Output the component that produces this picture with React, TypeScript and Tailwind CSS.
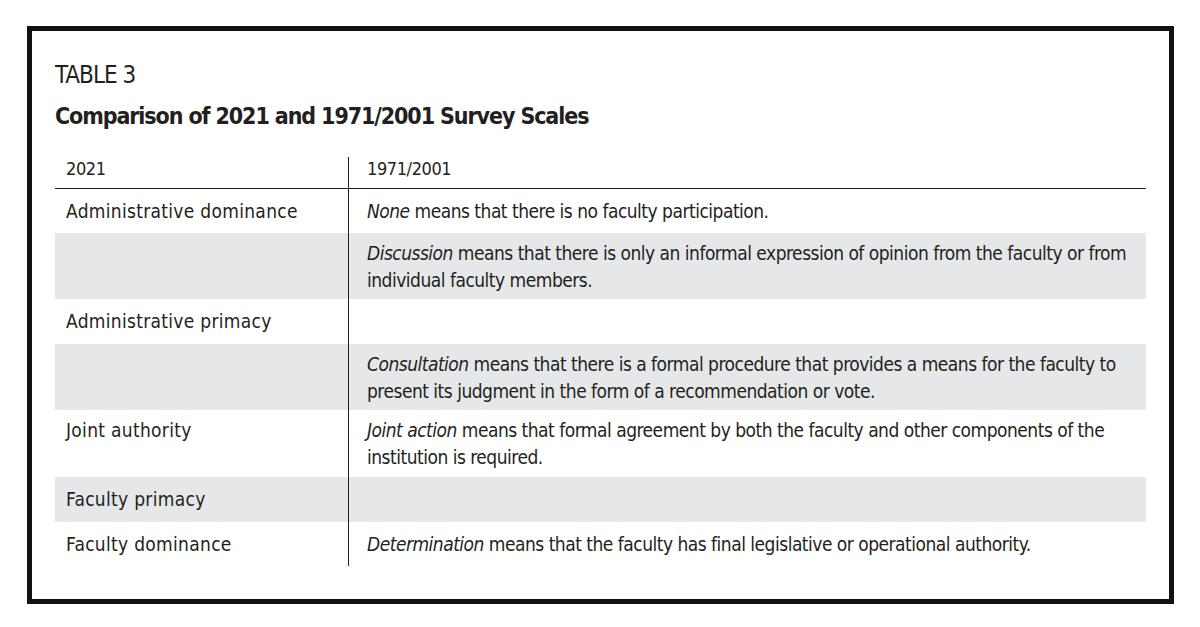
import React from "react";

const font = {
  fontFamily:
    "'Liberation Sans Narrow', 'DejaVu Sans Condensed', 'Roboto Condensed', 'Liberation Sans', sans-serif",
};

type Row = {
  left: string;
  right: React.ReactNode;
  h: string;
  gray: boolean;
  multi: boolean;
};

const rows: Row[] = [
  {
    left: "Administrative dominance",
    right: (
      <>
        <i>None</i> means that there is no faculty participation.
      </>
    ),
    h: "h-[44px]",
    gray: false,
    multi: false,
  },
  {
    left: "",
    right: (
      <>
        <i>Discussion</i> means that there is only an informal expression of opinion from the faculty or from
        <br />
        individual faculty members.
      </>
    ),
    h: "h-[66px]",
    gray: true,
    multi: true,
  },
  {
    left: "Administrative primacy",
    right: "",
    h: "h-[45px]",
    gray: false,
    multi: false,
  },
  {
    left: "",
    right: (
      <>
        <i>Consultation</i> means that there is a formal procedure that provides a means for the faculty to
        <br />
        present its judgment in the form of a recommendation or vote.
      </>
    ),
    h: "h-[66px]",
    gray: true,
    multi: true,
  },
  {
    left: "Joint authority",
    right: (
      <>
        <i>Joint action</i> means that formal agreement by both the faculty and other components of the
        <br />
        institution is required.
      </>
    ),
    h: "h-[67px]",
    gray: false,
    multi: true,
  },
  {
    left: "Faculty primacy",
    right: "",
    h: "h-[45px]",
    gray: true,
    multi: false,
  },
  {
    left: "Faculty dominance",
    right: (
      <>
        <i>Determination</i> means that the faculty has final legislative or operational authority.
      </>
    ),
    h: "h-[44px]",
    gray: false,
    multi: false,
  },
];

export default function App() {
  return (
    <div className="w-[1200px] h-[627px] bg-white pt-[26px] pl-[27px] text-[#231f20]" style={font}>
      <div className="w-[1147px] h-[578px] border-[5px] border-[#111] px-[23px] pt-[30px]">
        <div className="text-[24px] leading-[28px] font-light tracking-[-1px]">TABLE 3</div>
        <div className="mt-[13px] text-[23px] leading-[28px] font-bold tracking-[-1.1px]">
          Comparison of 2021 and 1971/2001 Survey Scales
        </div>
        <div className="mt-[27px] w-[1091px]">
          <div className="flex h-[32px] border-b-[1.5px] border-[#231f20] text-[18px] leading-[24px] tracking-[-0.4px]">
            <div className="w-[294px] shrink-0 pl-[11px] border-r-[1.5px] border-[#231f20]">2021</div>
            <div className="flex-1 pl-[18px]">1971/2001</div>
          </div>
          {rows.map((r, i) => (
            <div
              key={i}
              className={`flex ${r.h} ${r.gray ? "bg-[#e6e7e8]" : "bg-white"} text-[19px] leading-[27px]`}
            >
              <div
                className={`w-[294px] shrink-0 pl-[11px] border-r-[1.5px] border-[#231f20] flex ${
                  r.multi ? "items-start pt-[7px]" : "items-center"
                }`}
              >
                <span className="tracking-[0.3px]">{r.left}</span>
              </div>
              <div
                className={`flex-1 min-w-0 pl-[18px] flex whitespace-nowrap tracking-[-0.5px] ${
                  r.multi ? "items-start pt-[7px]" : "items-center"
                }`}
              >
                <span>{r.right}</span>
              </div>
            </div>
          ))}
        </div>
      </div>
    </div>
  );
}
